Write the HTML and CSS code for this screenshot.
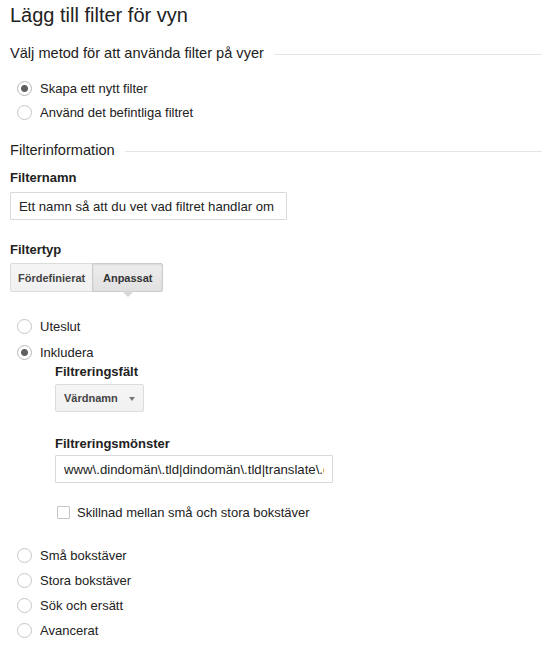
FILE: index.html
```html
<!DOCTYPE html>
<html lang="sv">
<head>
    <meta charset="UTF-8">
    <meta name="viewport" content="width=device-width, initial-scale=1.0">
    <title>Lägg till filter för vyn</title>
    <link rel="stylesheet" href="styles.css">
</head>
<body>
    <div class="page">
        <h1 class="title">Lägg till filter för vyn</h1>

        <div class="section-head">
            <span>Välj metod för att använda filter på vyer</span>
            <div class="rule"></div>
        </div>
        <div class="options options-method">
            <label class="option"><input type="radio" name="method" checked> Skapa ett nytt filter</label>
            <label class="option"><input type="radio" name="method"> Använd det befintliga filtret</label>
        </div>

        <div class="section-head section-info">
            <span>Filterinformation</span>
            <div class="rule"></div>
        </div>

        <div class="field-label name-label">Filternamn</div>
        <input type="text" class="text-input name-input" value="Ett namn så att du vet vad filtret handlar om">

        <div class="field-label type-label">Filtertyp</div>
        <div class="tabs">
            <button type="button" class="tab">Fördefinierat</button>
            <button type="button" class="tab tab-active">Anpassat</button>
        </div>

        <div class="options options-kind">
            <label class="option"><input type="radio" name="kind"> Uteslut</label>
            <label class="option"><input type="radio" name="kind" checked> Inkludera</label>
        </div>

        <div class="include-details">
            <div class="field-label">Filtreringsfält</div>
            <button type="button" class="select">Värdnamn <span class="caret"></span></button>

            <div class="field-label pattern-label">Filtreringsmönster</div>
            <input type="text" class="text-input pattern-input" value="www\.dindomän\.tld|dindomän\.tld|translate\.googleusercontent\.com">

            <label class="check"><input type="checkbox"> Skillnad mellan små och stora bokstäver</label>
        </div>

        <div class="options options-other">
            <label class="option"><input type="radio" name="kind"> Små bokstäver</label>
            <label class="option"><input type="radio" name="kind"> Stora bokstäver</label>
            <label class="option"><input type="radio" name="kind"> Sök och ersätt</label>
            <label class="option"><input type="radio" name="kind"> Avancerat</label>
        </div>
    </div>
</body>
</html>
```

FILE: styles.css
```css
body {
    margin: 0;
    font-family: "Liberation Sans", Arial, sans-serif;
    font-size: 13px;
    color: #222;
    background-color: #fff;
}
.page {
    padding-left: 10px;
}
.title {
    margin: 3px 0 0;
    font-size: 20px;
    line-height: 24px;
    font-weight: normal;
    color: #222;
}
.section-head {
    display: flex;
    align-items: flex-start;
    margin-top: 17px;
    font-size: 14.6px;
    line-height: 18px;
}
.section-head .rule {
    flex: 1;
    margin: 10px 0 0 10px;
    border-top: 1px solid #e5e5e5;
}
.options {
    display: flex;
    flex-direction: column;
}
.options-method {
    margin-top: 14px;
}
.options-kind {
    margin-top: 22px;
    gap: 2px;
}
.options-other {
    margin-top: 23px;
}
.option {
    display: flex;
    align-items: center;
    gap: 8px;
    height: 24px;
    padding-left: 7px;
}
.options-other .option {
    height: 25px;
}
.option input {
    appearance: none;
    -webkit-appearance: none;
    width: 15px;
    height: 15px;
    margin: 0;
    border: 1px solid #c6c6c6;
    border-radius: 50%;
    background-color: #fff;
}
.option input:checked {
    border-color: #b8b8b8;
    background: radial-gradient(circle, #606060 0, #606060 3px, #fff 4px);
}
.field-label {
    font-weight: bold;
    font-size: 13px;
    line-height: 16px;
}
.name-label {
    margin-top: 11px;
}
.type-label {
    margin-top: 22px;
}
.pattern-label {
    margin-top: 24px;
}
.text-input {
    display: block;
    box-sizing: border-box;
    height: 28px;
    padding: 0 8px;
    border: 1px solid #d9d9d9;
    border-radius: 1px;
    font-family: "Liberation Sans", Arial, sans-serif;
    font-size: 13.2px;
    color: #222;
    outline: none;
}
.name-input {
    width: 277px;
    margin-top: 6px;
}
.pattern-input {
    width: 278px;
    margin-top: 3px;
}
.tabs {
    display: flex;
    margin-top: 5px;
}
.tab {
    position: relative;
    box-sizing: border-box;
    height: 29px;
    min-width: 71px;
    padding: 0 7px;
    border: 1px solid #dcdcdc;
    background: linear-gradient(#f5f5f5, #f1f1f1);
    font-family: "Liberation Sans", Arial, sans-serif;
    font-size: 11px;
    font-weight: bold;
    color: #444;
}
.tab:first-child {
    border-radius: 2px 0 0 2px;
}
.tab + .tab {
    margin-left: -1px;
    border-radius: 0 2px 2px 0;
}
.tab-active {
    border-color: #ccc;
    background: linear-gradient(#eee, #e0e0e0);
    box-shadow: inset 0 1px 2px rgba(0, 0, 0, 0.1);
    color: #333;
}
.tab-active::after {
    content: "";
    position: absolute;
    left: 50%;
    top: 100%;
    margin-left: -6px;
    border-left: 6px solid transparent;
    border-right: 6px solid transparent;
    border-top: 6px solid #d6d6d6;
}
.include-details {
    padding-left: 45px;
}
.select {
    display: flex;
    align-items: center;
    justify-content: space-between;
    box-sizing: border-box;
    width: 89px;
    height: 28px;
    margin-top: 4px;
    padding: 0 8px;
    border: 1px solid #dcdcdc;
    border-radius: 2px;
    background: linear-gradient(#f5f5f5, #f1f1f1);
    font-family: "Liberation Sans", Arial, sans-serif;
    font-size: 11px;
    font-weight: bold;
    color: #444;
}
.caret {
    width: 0;
    height: 0;
    border-left: 3.5px solid transparent;
    border-right: 3.5px solid transparent;
    border-top: 4px solid #777;
    margin-top: 1px;
}
.check {
    display: flex;
    align-items: center;
    gap: 7px;
    height: 16px;
    margin-top: 21px;
    padding-left: 2px;
}
.check input {
    appearance: none;
    -webkit-appearance: none;
    width: 13px;
    height: 13px;
    margin: 0;
    border: 1px solid #c6c6c6;
    border-radius: 1px;
    background-color: #fff;
}
```
